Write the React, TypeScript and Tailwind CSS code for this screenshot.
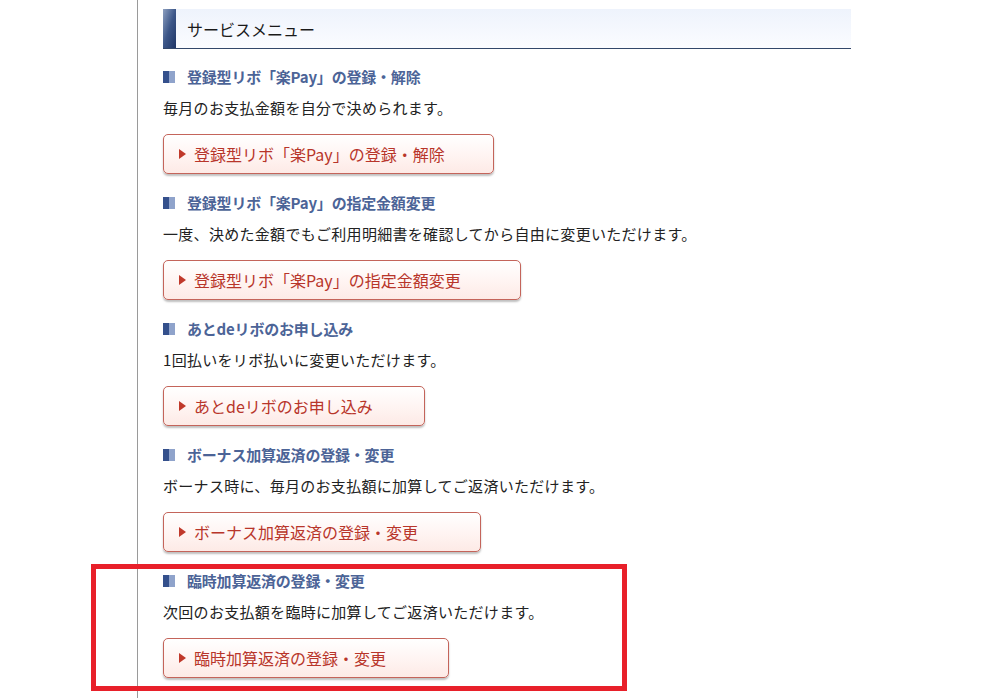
import React from "react"

interface MenuItem {
    title: string
    description: string
    buttonWidth: string
}

const items: MenuItem[] = [
    {
        title: "登録型リボ「楽Pay」の登録・解除",
        description: "毎月のお支払金額を自分で決められます。",
        buttonWidth: "w-[331px]",
    },
    {
        title: "登録型リボ「楽Pay」の指定金額変更",
        description: "一度、決めた金額でもご利用明細書を確認してから自由に変更いただけます。",
        buttonWidth: "w-[358px]",
    },
    {
        title: "あとdeリボのお申し込み",
        description: "1回払いをリボ払いに変更いただけます。",
        buttonWidth: "w-[262px]",
    },
    {
        title: "ボーナス加算返済の登録・変更",
        description: "ボーナス時に、毎月のお支払額に加算してご返済いただけます。",
        buttonWidth: "w-[318px]",
    },
    {
        title: "臨時加算返済の登録・変更",
        description: "次回のお支払額を臨時に加算してご返済いただけます。",
        buttonWidth: "w-[286px]",
    },
]

function Section({ item }: { item: MenuItem }) {
    return (
        <div className="flex flex-col">
            <div className="flex items-center h-[20px]">
                <span className="flex w-[12px] h-[12px] mr-[12px]">
                    <span className="w-[6px] h-full bg-[#34508c]" />
                    <span className="w-[6px] h-full bg-[#8fa3cb]" />
                </span>
                <span className="text-[15px] font-bold text-[#4c6497] leading-[20px] tracking-[-0.2px]">{item.title}</span>
            </div>
            <p className="mt-[11px] h-[20px] text-[15px] tracking-[0.3px] leading-[20px] text-[#222]">{item.description}</p>
            <div className="mt-[16px] mb-[19px]">
                <button
                    className={`${item.buttonWidth} h-[40px] flex items-center pl-[15px] rounded-[5px] border border-[#c4645a] bg-gradient-to-b from-white via-[#fff5f3] to-[#fdeae6] shadow-[0_2px_2px_rgba(0,0,0,0.25)]`}
                >
                    <span className="w-0 h-0 border-y-[5px] border-y-transparent border-l-[7px] border-l-[#c0392b] mr-[8px]" />
                    <span className="text-[16px] font-normal text-[#b8352a] leading-none">{item.title}</span>
                </button>
            </div>
        </div>
    )
}

export default function App() {
    return (
        <div
            className="relative w-[1003px] h-[698px] overflow-hidden bg-white"
            style={{ fontFamily: '"Noto Sans CJK JP", "Noto Sans", sans-serif' }}
        >
            <div className="flex h-full">
                <div className="w-[137px] shrink-0" />
                <div className="border-l border-[#9a9a9a] pl-[25px] h-full">
                    {/* header bar */}
                    <div className="mt-[9px] w-[688px] h-[40px] flex border-b border-[#33476a] bg-gradient-to-b from-[#eef3fc] to-[#fbfcff]">
                        <div className="w-[13px] h-full bg-gradient-to-br from-[#8ea0c0] via-[#3c5688] to-[#1f3566]" />
                        <span className="ml-[11px] self-center text-[16px] text-[#1a1a1a]">サービスメニュー</span>
                    </div>

                    <div className="mt-[18px]">
                        {items.map((item) => (
                            <Section key={item.title} item={item} />
                        ))}
                    </div>
                </div>
            </div>

            {/* highlight box */}
            <div className="absolute left-[91px] top-[564px] w-[536px] h-[127px] border-[5px] border-[#e8202a]" />
        </div>
    )
}
